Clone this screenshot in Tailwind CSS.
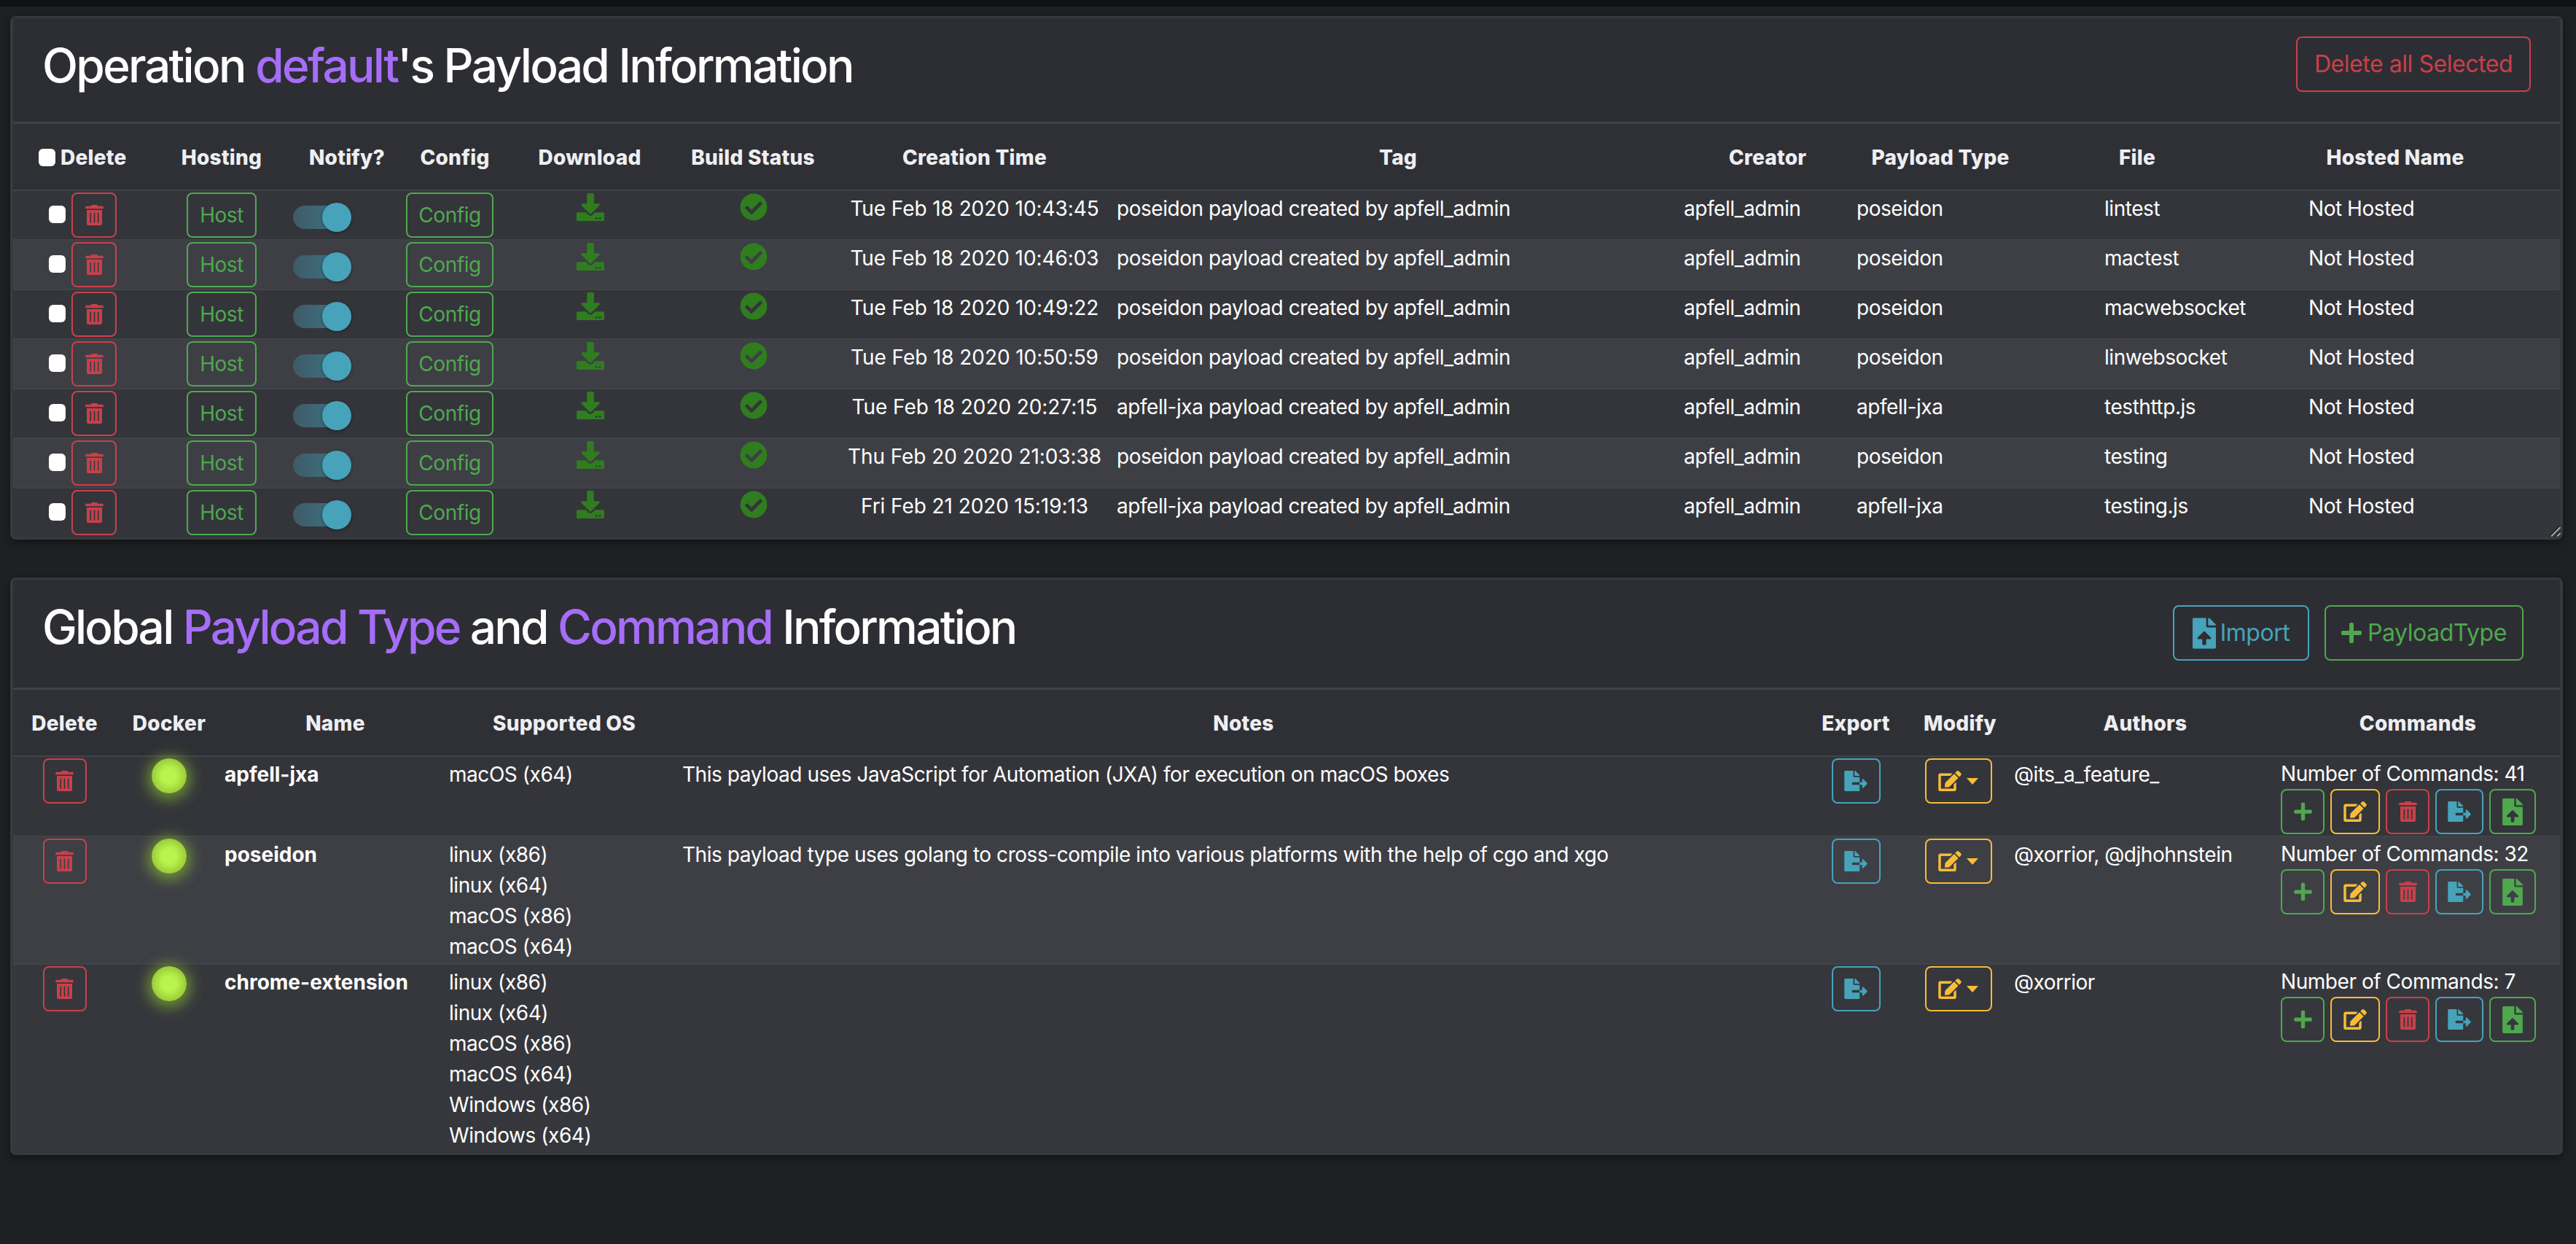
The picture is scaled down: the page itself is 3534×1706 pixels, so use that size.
<!DOCTYPE html>
<html lang="en">
<head>
  <meta charset="UTF-8" />
  <title>Payload Information</title>
  <script src="https://cdn.jsdelivr.net/npm/@tailwindcss/browser@4"></script>
</head>
<body class="min-h-screen bg-[#1f2023] text-white text-[28px] leading-[42px] tracking-[-0.45px] [font-family:Inter,sans-serif]">
  <div class="h-[9px] bg-[#111214]"></div>

  <main class="pl-[14px] pt-[13px] w-[3516px]">
    <!-- payloads -->
    <section class="relative pb-[1px] border-x-[4px] border-y-[3px] border-[#363a3f] rounded-[8px] bg-[#34353a] shadow-[0_4px_12px_rgba(0,0,0,0.4)]">
      <div class="flex justify-between h-[145px] pl-[40px] pr-[40px] bg-[#2d2e33] border-b-[3px] border-[#3e434a]">
        <h2 class="mt-[27px] text-[64px] leading-[76px] font-medium tracking-[-2.7px] whitespace-nowrap">Operation <span class="text-[#a66df8]">default</span>'s Payload Information</h2>
        <button class="mt-[25px] h-[76px] w-[322px] border-2 border-[#c9404a] rounded-[8px] text-[32px] text-[#c9404a]">Delete all Selected</button>
      </div>
      <div class="grid grid-cols-[202px_168px_176px_120px_250px_198px_410px_752px_262px_212px_328px_380px] h-[90px] pt-[2px] items-center font-extrabold tracking-[0.25px] text-center text-[#eeeef2] bg-[#2f3035]">
        <div class="flex items-center pl-[35px] gap-[7px]"><input type="checkbox" class="appearance-none w-[23px] h-[24px] rounded-[6px] bg-white" /><span>Delete</span></div>
        <div>Hosting</div><div>Notify?</div><div>Config</div><div>Download</div><div>Build Status</div>
        <div>Creation Time</div><div>Tag</div><div>Creator</div><div>Payload Type</div><div>File</div><div>Hosted Name</div>
      </div>
      <div id="payloads"></div>
      <svg class="absolute right-[-1px] bottom-[1px] w-[15px] h-[15px]" viewBox="0 0 15 15">
        <path d="M0 14 14 0" stroke="#1c1c1e" stroke-width="1.5" />
        <path d="M2 14.5 14.5 2" stroke="#a5a5a8" stroke-width="2" />
        <path d="M8 14 14 8" stroke="#1c1c1e" stroke-width="1.5" />
        <path d="M10 14.5 14.5 10" stroke="#a5a5a8" stroke-width="2" />
      </svg>
    </section>

    <!-- payload types -->
    <section class="mt-[52px] border-x-[4px] border-y-[3px] border-[#363a3f] rounded-[8px] bg-[#2f3035] shadow-[0_4px_12px_rgba(0,0,0,0.4)]">
      <div class="flex justify-between h-[151px] pl-[40px] pr-[50px] bg-[#2d2e33] border-b-[3px] border-[#3e434a]">
        <h2 class="mt-[27px] text-[64px] leading-[76px] font-medium tracking-[-2.8px] whitespace-nowrap">Global <span class="text-[#a66df8]">Payload Type</span> and <span class="text-[#a66df8]">Command</span> Information</h2>
        <div class="flex gap-[21px] mt-[35px]">
          <button class="flex items-center justify-center gap-[6px] h-[76px] w-[187px] border-2 border-[#46a3ba] rounded-[8px] text-[32px] text-[#46a3ba]"><svg class="h-[43px] w-[32px]" viewBox="0 0 384 512" fill="currentColor"><use href="#i-upload" /></svg>Import</button>
          <button class="flex items-center justify-center gap-[8px] h-[76px] w-[273px] border-2 border-[#4fa84f] rounded-[8px] text-[32px] text-[#4fa84f]"><svg class="h-[32px] w-[28px]" viewBox="0 0 448 512" fill="currentColor"><use href="#i-plus" /></svg>PayloadType</button>
        </div>
      </div>
      <div class="grid grid-cols-[141px_146px_310px_318px_1546px_134px_152px_356px_392px] h-[90px] pt-[2px] items-center font-extrabold tracking-[0.25px] text-center text-[#eeeef2] bg-[#2f3035]">
        <div>Delete</div><div>Docker</div><div>Name</div><div>Supported OS</div><div>Notes</div><div>Export</div><div>Modify</div><div>Authors</div><div>Commands</div>
      </div>
      <div id="types"></div>
    </section>
  </main>

  <!-- font awesome glyphs -->
  <svg class="hidden">
    <symbol id="i-trash" viewBox="0 0 448 512"><path d="M32 464a48 48 0 0 0 48 48h288a48 48 0 0 0 48-48V128H32zm272-256a16 16 0 0 1 32 0v224a16 16 0 0 1-32 0zm-96 0a16 16 0 0 1 32 0v224a16 16 0 0 1-32 0zm-96 0a16 16 0 0 1 32 0v224a16 16 0 0 1-32 0zM432 32H312l-9.4-18.7A24 24 0 0 0 281.1 0H166.8a23.72 23.72 0 0 0-21.4 13.3L136 32H16A16 16 0 0 0 0 48v32a16 16 0 0 0 16 16h416a16 16 0 0 0 16-16V48a16 16 0 0 0-16-16z" /></symbol>
    <symbol id="i-plus" viewBox="0 0 448 512"><path d="M416 208H272V64c0-17.67-14.33-32-32-32h-32c-17.67 0-32 14.33-32 32v144H32c-17.67 0-32 14.33-32 32v32c0 17.67 14.33 32 32 32h144v144c0 17.67 14.33 32 32 32h32c17.67 0 32-14.33 32-32V304h144c17.67 0 32-14.33 32-32v-32c0-17.67-14.33-32-32-32z" /></symbol>
    <symbol id="i-download" viewBox="0 0 512 512"><path d="M216 0h80c13.3 0 24 10.7 24 24v168h87.7c17.8 0 26.7 21.5 14.1 34.1L269.7 378.3c-7.5 7.5-19.8 7.5-27.3 0L90.1 226.1c-12.6-12.6-3.7-34.1 14.1-34.1H192V24c0-13.3 10.7-24 24-24zm296 376v112c0 13.3-10.7 24-24 24H24c-13.3 0-24-10.7-24-24V376c0-13.3 10.7-24 24-24h146.7l49 49c20.1 20.1 52.5 20.1 72.6 0l49-49H488c13.3 0 24 10.7 24 24zm-124 88c0-11-9-20-20-20s-20 9-20 20 9 20 20 20 20-9 20-20zm64 0c0-11-9-20-20-20s-20 9-20 20 9 20 20 20 20-9 20-20z" /></symbol>
    <symbol id="i-check" viewBox="0 0 512 512"><path d="M504 256c0 136.967-111.033 248-248 248S8 392.967 8 256 119.033 8 256 8s248 111.033 248 248zM227.314 387.314l184-184c6.248-6.248 6.248-16.379 0-22.627l-22.627-22.627c-6.248-6.249-16.379-6.249-22.628 0L216 308.118l-70.059-70.059c-6.248-6.248-16.379-6.248-22.628 0l-22.627 22.627c-6.248 6.248-6.248 16.379 0 22.627l104 104c6.249 6.249 16.379 6.249 22.628.001z" /></symbol>
    <symbol id="i-edit" viewBox="0 0 576 512"><path d="M402.6 83.2l90.2 90.2c3.8 3.8 3.8 10 0 13.8L274.4 405.6l-92.8 10.3c-12.4 1.4-22.9-9.1-21.5-21.5l10.3-92.8L388.8 83.2c3.8-3.8 10-3.8 13.8 0zm162-22.9l-48.8-48.8c-15.2-15.2-39.9-15.2-55.2 0l-35.4 35.4c-3.8 3.8-3.8 10 0 13.8l90.2 90.2c3.8 3.8 10 3.8 13.8 0l35.4-35.4c15.2-15.3 15.2-40 0-55.2zM384 346.2V448H64V128h229.8c3.2 0 6.2-1.3 8.5-3.5l40-40c7.6-7.6 2.2-20.5-8.5-20.5H48C21.5 64 0 85.5 0 112v352c0 26.5 21.5 48 48 48h352c26.5 0 48-21.5 48-48V306.2c0-10.7-12.9-16-20.5-8.5l-40 40c-2.2 2.3-3.5 5.3-3.5 8.5z" /></symbol>
    <symbol id="i-export" viewBox="0 0 576 512"><path d="M384 121.9c0-6.3-2.5-12.4-7-16.9L279.1 7c-4.5-4.5-10.6-7-17-7H256v128h128zM571 308l-95.7-96.4c-10.1-10.1-27.4-3-27.4 11.3V288h-64v64h64v65.2c0 14.3 17.3 21.4 27.4 11.3L571 332c6.6-6.6 6.6-17.4 0-24zm-379 28v-32c0-8.8 7.2-16 16-16h176V160H248c-13.2 0-24-10.8-24-24V0H24C10.7 0 0 10.7 0 24v464c0 13.3 10.7 24 24 24h336c13.3 0 24-10.7 24-24V352H208c-8.8 0-16-7.2-16-16z" /></symbol>
    <symbol id="i-upload" viewBox="0 0 384 512"><path d="M224 136V0H24C10.7 0 0 10.7 0 24v464c0 13.3 10.7 24 24 24h336c13.3 0 24-10.7 24-24V160H248c-13.2 0-24-10.8-24-24zm65.18 216.01H224v80c0 8.84-7.16 16-16 16h-32c-8.84 0-16-7.16-16-16v-80H94.82c-14.28 0-21.41-17.29-11.27-27.36l96.42-95.7c6.65-6.61 17.39-6.61 24.04 0l96.42 95.7c10.15 10.07 3.03 27.36-11.25 27.36zM377 105L279.1 7c-4.5-4.5-10.6-7-17-7H256v128h128v-6.1c0-6.3-2.5-12.4-7-16.9z" /></symbol>
  </svg>

  <script>
    const payloads = [
      ['Tue Feb 18 2020 10:43:45', 'poseidon', 'lintest'],
      ['Tue Feb 18 2020 10:46:03', 'poseidon', 'mactest'],
      ['Tue Feb 18 2020 10:49:22', 'poseidon', 'macwebsocket'],
      ['Tue Feb 18 2020 10:50:59', 'poseidon', 'linwebsocket'],
      ['Tue Feb 18 2020 20:27:15', 'apfell-jxa', 'testhttp.js'],
      ['Thu Feb 20 2020 21:03:38', 'poseidon', 'testing'],
      ['Fri Feb 21 2020 15:19:13', 'apfell-jxa', 'testing.js'],
    ];

    const types = [
      { name: 'apfell-jxa', os: ['macOS (x64)'], notes: 'This payload uses JavaScript for Automation (JXA) for execution on macOS boxes', authors: '@its_a_feature_', count: 41, row: 'h-[110px] bg-[#34353a]' },
      { name: 'poseidon', os: ['linux (x86)', 'linux (x64)', 'macOS (x86)', 'macOS (x64)'], notes: 'This payload type uses golang to cross-compile into various platforms with the help of cgo and xgo', authors: '@xorrior, @djhohnstein', count: 32, row: 'h-[175px] bg-[#3e3f45]' },
      { name: 'chrome-extension', os: ['linux (x86)', 'linux (x64)', 'macOS (x86)', 'macOS (x64)', 'Windows (x86)', 'Windows (x64)'], notes: '', authors: '@xorrior', count: 7, row: 'h-[260px] bg-[#36373c]' },
    ];

    const icon = (name, cls) => `<svg class="${cls}" fill="currentColor"><use href="#i-${name}" /></svg>`;
    const caret = '<span class="ml-[7px] w-0 h-0 border-x-[8px] border-t-[9px] border-x-transparent border-t-[#f7bc38]"></span>';

    document.getElementById('payloads').innerHTML = payloads.map(([time, type, file], i) => `
      <div class="grid grid-cols-[206px_160px_116px_234px_152px_296px_310px_818px_237px_340px_280px_1fr] h-[68px] border-t-2 border-[#3f444b] ${i % 2 ? 'bg-[#3e3f45]' : 'bg-[#34353a]'}">
        <div class="flex items-start pl-[49px] gap-[8px] pt-[2px]">
          <input type="checkbox" class="appearance-none mt-[18px] w-[23px] h-[24px] rounded-[6px] bg-white" />
          <button class="flex items-center justify-center w-[62px] h-[62px] border-2 border-[#c9404a] rounded-[8px] text-[#c9404a]">${icon('trash', 'w-[25px] h-[28px]')}</button>
        </div>
        <div class="flex justify-center pt-[2px]"><button class="w-[96px] h-[62px] border-2 border-[#4fa84f] rounded-[8px] text-[#4fa84f]">Host</button></div>
        <div class="flex justify-center pt-[18px]">
          <div class="relative w-[80px] h-[32px] mt-[2px]">
            <div class="absolute left-0 top-0 w-[64px] h-[32px] rounded-full bg-[linear-gradient(90deg,#3f5a66,#3d7385)]"></div>
            <div class="absolute right-0 top-[-4px] w-[40px] h-[40px] rounded-full bg-[#46a3ba] shadow-[0_1px_4px_rgba(0,0,0,0.4)]"></div>
          </div>
        </div>
        <div class="flex justify-center pt-[2px]"><button class="w-[120px] h-[62px] border-2 border-[#4fa84f] rounded-[8px] text-[#4fa84f]">Config</button></div>
        <div class="flex justify-center pt-[3px] text-[#2f7d1f]">${icon('download', 'w-[38px] h-[38px]')}</div>
        <div class="flex justify-center pt-[3px] text-[#2f7d1f]">${icon('check', 'w-[38px] h-[38px]')}</div>
        <div class="flex justify-center pt-[3px] whitespace-nowrap tracking-[-0.08px]">${time}</div>
        <div class="pl-[40px] pt-[3px]">${type} payload created by apfell_admin</div>
        <div class="pt-[3px]">apfell_admin</div>
        <div class="pt-[3px]">${type}</div>
        <div class="pt-[3px]">${file}</div>
        <div class="pt-[3px]">Not Hosted</div>
      </div>`).join('');

    document.getElementById('types').innerHTML = types.map(t => `
      <div class="grid grid-cols-[141px_146px_311px_320px_1546px_128px_153px_366px_1fr] border-t-2 border-[#3f444b] ${t.row}">
        <div class="flex justify-center pt-[2px]"><button class="flex items-center justify-center w-[60px] h-[62px] border-2 border-[#c9404a] rounded-[8px] text-[#c9404a]">${icon('trash', 'w-[25px] h-[28px]')}</button></div>
        <div class="flex justify-center pt-[2px]"><div class="w-[48px] h-[48px] rounded-full bg-[radial-gradient(circle,#b8f44c_30%,#84ad2b_100%)] shadow-[0_3px_18px_6px_rgba(150,210,50,0.55)]"></div></div>
        <div class="pl-[3px] pt-[3px] font-bold tracking-normal">${t.name}</div>
        <div class="pt-[3px]">${t.os.map(o => `<div>${o}</div>`).join('')}</div>
        <div class="pt-[3px]">${t.notes}</div>
        <div class="flex justify-center pt-[2px]"><button class="flex items-center justify-center w-[67px] h-[62px] border-2 border-[#46a3ba] rounded-[8px] text-[#46a3ba]">${icon('export', 'w-[32px] h-[28px]')}</button></div>
        <div class="flex justify-center pt-[2px]"><button class="flex items-center justify-center w-[92px] h-[62px] border-2 border-[#f7bc38] rounded-[8px] text-[#f7bc38]">${icon('edit', 'w-[32px] h-[28px]')}${caret}</button></div>
        <div class="pt-[3px]">${t.authors}</div>
        <div class="pt-[2px]">
          <div>Number of Commands: ${t.count}</div>
          <div class="flex gap-[8px]">
            <button class="flex items-center justify-center w-[60px] h-[62px] border-2 border-[#4fa84f] rounded-[8px] text-[#4fa84f]">${icon('plus', 'w-[25px] h-[28px]')}</button>
            <button class="flex items-center justify-center w-[68px] h-[62px] border-2 border-[#f7bc38] rounded-[8px] text-[#f7bc38]">${icon('edit', 'w-[32px] h-[28px]')}</button>
            <button class="flex items-center justify-center w-[60px] h-[62px] border-2 border-[#c9404a] rounded-[8px] text-[#c9404a]">${icon('trash', 'w-[25px] h-[28px]')}</button>
            <button class="flex items-center justify-center w-[66px] h-[62px] border-2 border-[#46a3ba] rounded-[8px] text-[#46a3ba]">${icon('export', 'w-[32px] h-[28px]')}</button>
            <button class="flex items-center justify-center w-[64px] h-[62px] border-2 border-[#4fa84f] rounded-[8px] text-[#4fa84f]">${icon('upload', 'w-[28px] h-[37px]')}</button>
          </div>
        </div>
      </div>`).join('');
  </script>
</body>
</html>
